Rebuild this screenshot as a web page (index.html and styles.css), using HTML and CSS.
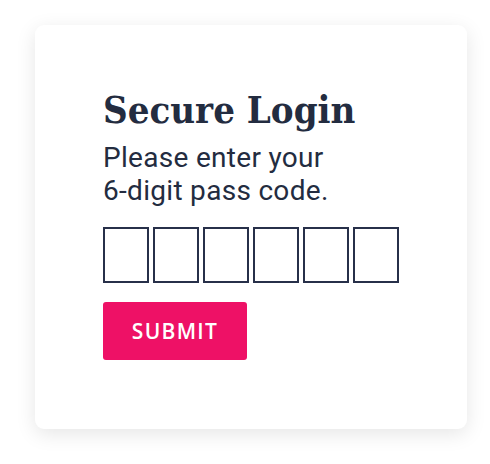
FILE: index.html
```html
<!DOCTYPE html>
<html>
<head>
<meta charset="utf-8">
<link rel="stylesheet" href="styles.css">
</head>
<body>
<main class="card">
  <h1 class="title">Secure Login</h1>
  <p class="lead">Please enter your<br>6-digit pass code.</p>
  <div class="digits">
    <input class="digit" type="text" maxlength="1" aria-label="Digit 1">
    <input class="digit" type="text" maxlength="1" aria-label="Digit 2">
    <input class="digit" type="text" maxlength="1" aria-label="Digit 3">
    <input class="digit" type="text" maxlength="1" aria-label="Digit 4">
    <input class="digit" type="text" maxlength="1" aria-label="Digit 5">
    <input class="digit" type="text" maxlength="1" aria-label="Digit 6">
  </div>
  <button class="submit" type="button">SUBMIT</button>
</main>
</body>
</html>
```

FILE: styles.css
```css
html, body {
  margin: 0;
  padding: 0;
  background: #ffffff;
}
body {
  width: 490px;
  height: 464px;
  padding: 25px 0 0 35px;
  box-sizing: border-box;
}
.card {
  width: 432px;
  height: 404px;
  box-sizing: border-box;
  background: #ffffff;
  border-radius: 9px;
  box-shadow: 0 5px 20px rgba(0, 0, 0, 0.1);
  padding: 63px 0 0 68px;
  display: flex;
  flex-direction: column;
  align-items: flex-start;
  color: #232c40;
}
.title {
  margin: 0;
  font-family: "DejaVu Serif Condensed", "DejaVu Serif", serif;
  font-stretch: condensed;
  font-weight: 700;
  font-size: 38px;
  line-height: 44px;
}
.lead {
  margin: 9px 0 0 0;
  font-family: Roboto, sans-serif;
  font-size: 28px;
  line-height: 33px;
  letter-spacing: 0.3px;
  font-weight: 400;
}
.digits {
  display: flex;
  gap: 4px;
  margin-top: 20px;
}
.digit {
  width: 46px;
  height: 56px;
  box-sizing: border-box;
  border: 2px solid #27304a;
  border-radius: 0;
  margin: 0;
  padding: 0;
  background: #fff;
}
.submit {
  margin-top: 19px;
  width: 144px;
  height: 58px;
  border: none;
  border-radius: 3px;
  background: #ee1166;
  color: #ffffff;
  font-family: "Open Sans", sans-serif;
  font-weight: 600;
  font-size: 21px;
  letter-spacing: 1.3px;
  padding: 0;
}
```
